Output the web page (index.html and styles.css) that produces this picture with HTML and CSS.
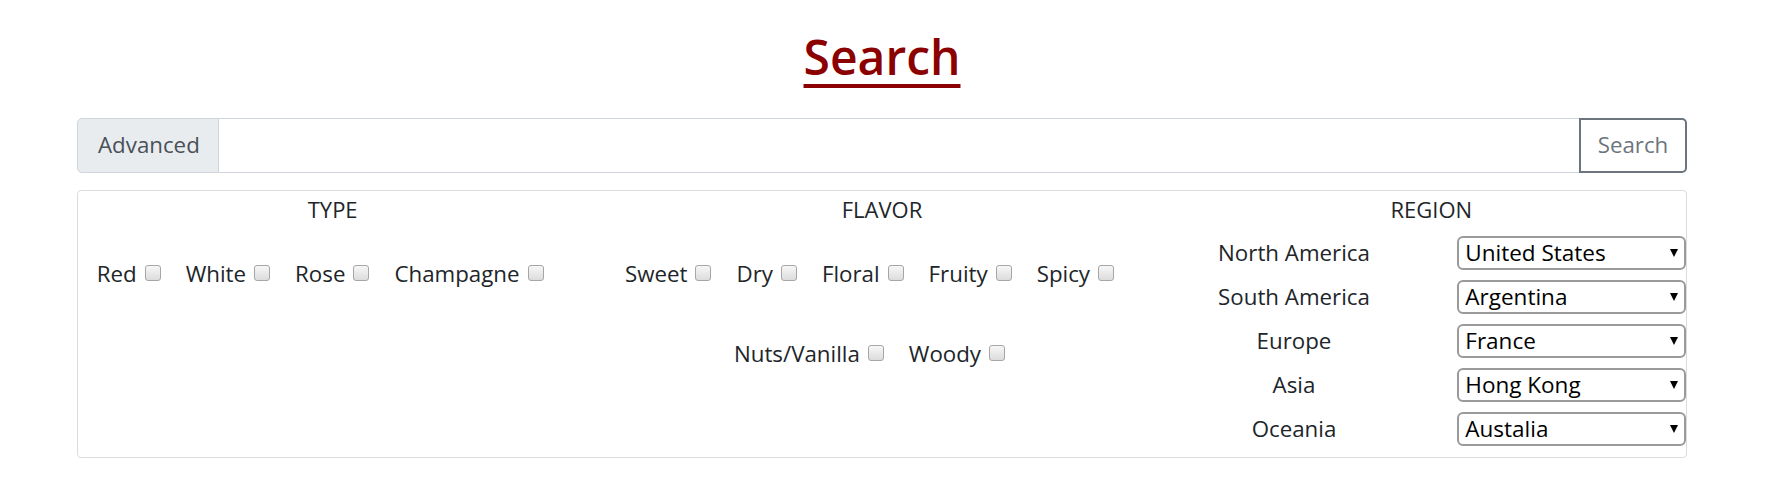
FILE: index.html
```html
<!DOCTYPE html>
<html>
<head>
<meta charset="utf-8">
<link rel="stylesheet" href="styles.css">
</head>
<body>
<div class="page">
  <h1 class="title"><a href="#">Search</a></h1>
  <div class="search-bar">
    <span class="addon">Advanced</span>
    <input class="query" type="text">
    <button class="btn">Search</button>
  </div>
  <div class="filters">
    <div class="row">
      <div class="col">
        <div class="heading">TYPE</div>
        <div class="checks">
          <label class="check">Red<input type="checkbox"></label>
          <label class="check">White<input type="checkbox"></label>
          <label class="check">Rose<input type="checkbox"></label>
          <label class="check">Champagne<input type="checkbox"></label>
        </div>
      </div>
      <div class="col">
        <div class="heading">FLAVOR</div>
        <div class="checks">
          <label class="check">Sweet<input type="checkbox"></label>
          <label class="check">Dry<input type="checkbox"></label>
          <label class="check">Floral<input type="checkbox"></label>
          <label class="check">Fruity<input type="checkbox"></label>
          <label class="check">Spicy<input type="checkbox"></label>
          <label class="check">Nuts/Vanilla<input type="checkbox"></label>
          <label class="check">Woody<input type="checkbox"></label>
        </div>
      </div>
      <div class="col">
        <div class="heading">REGION</div>
        <div class="regions">
          <div class="region"><span class="rlabel">North America</span><span class="sel"><select><option>United States</option></select></span></div>
          <div class="region"><span class="rlabel">South America</span><span class="sel"><select><option>Argentina</option></select></span></div>
          <div class="region"><span class="rlabel">Europe</span><span class="sel"><select><option>France</option></select></span></div>
          <div class="region"><span class="rlabel">Asia</span><span class="sel"><select><option>Hong Kong</option></select></span></div>
          <div class="region"><span class="rlabel">Oceania</span><span class="sel"><select><option>Austalia</option></select></span></div>
        </div>
      </div>
    </div>
  </div>
</div>
</body>
</html>
```

FILE: styles.css
```css
html, body {
  margin: 0;
  padding: 0;
  background: #fff;
}
body {
  font-family: "Open Sans", "Noto Sans", sans-serif;
  font-size: 22.3px;
  line-height: 1.5;
  color: #212529;
}
.page {
  width: 1610px;
  margin-left: 77px;
  padding-top: 28px;
}
.title {
  margin: 0 0 32px;
  text-align: center;
  font-size: 48px;
  font-weight: 600;
  line-height: 1.2;
}
.title a {
  color: #8b0000;
  text-decoration: underline;
  text-decoration-thickness: 3.5px;
  text-underline-offset: 9px;
}
.search-bar {
  display: flex;
  height: 55px;
  margin-bottom: 17px;
}
.addon {
  box-sizing: border-box;
  width: 142px;
  display: flex;
  align-items: center;
  padding: 0 20px;
  background: #e9ecef;
  border: 1px solid #ced4da;
  border-radius: 5px 0 0 5px;
  color: #495057;
}
.query {
  flex: 1;
  border: 1px solid #ced4da;
  border-left: 0;
  border-right: 0;
  margin: 0;
  padding: 0;
  outline: none;
}
.btn {
  box-sizing: border-box;
  width: 108px;
  border: 2px solid #6c757d;
  border-radius: 0 5px 5px 0;
  background: #fff;
  color: #6c757d;
  font: inherit;
  padding: 0;
}
.filters {
  box-sizing: border-box;
  height: 268px;
  border: 1px solid #dcdcdc;
  border-radius: 4px;
}
.row {
  display: grid;
  grid-template-columns: 1fr 1fr 1fr;
  margin: 0 -20px;
}
.heading {
  text-align: center;
  padding-top: 2px;
  font-size: 22px;
  line-height: 33px;
}
.checks {
  display: flex;
  flex-wrap: wrap;
  justify-content: center;
  row-gap: 45.5px;
  margin-top: 31px;
}
.check {
  display: flex;
  align-items: baseline;
  margin-right: 25px;
  line-height: 34.5px;
}
.check input {
  appearance: none;
  -webkit-appearance: none;
  box-sizing: border-box;
  width: 16px;
  height: 16px;
  margin: 0 0 0 8px;
  border: 1px solid #a6a6a6;
  border-radius: 3px;
  background: linear-gradient(#f7f7f7, #dcdcdc);
  position: relative;
  top: -1px;
}
.regions {
  margin-top: 10px;
  display: flex;
  flex-direction: column;
  gap: 10px;
}
.region {
  display: grid;
  grid-template-columns: 1fr 1fr;
  align-items: center;
  height: 34px;
}
.rlabel {
  text-align: center;
  line-height: 34px;
}
.sel {
  position: relative;
  margin-left: 26px;
  width: 229px;
  height: 34px;
}
.sel select {
  appearance: none;
  -webkit-appearance: none;
  box-sizing: border-box;
  width: 100%;
  height: 34px;
  margin: 0;
  padding: 0 0 0 6px;
  border: 2px solid #9a9a9a;
  border-radius: 6px;
  background: #fff;
  color: #000;
  font: inherit;
  font-size: 22.5px;
  line-height: 30px;
}
.sel::after {
  content: "";
  position: absolute;
  right: 8px;
  top: 13px;
  width: 0;
  height: 0;
  border-left: 4px solid transparent;
  border-right: 4px solid transparent;
  border-top: 8px solid #000;
  pointer-events: none;
}
```
